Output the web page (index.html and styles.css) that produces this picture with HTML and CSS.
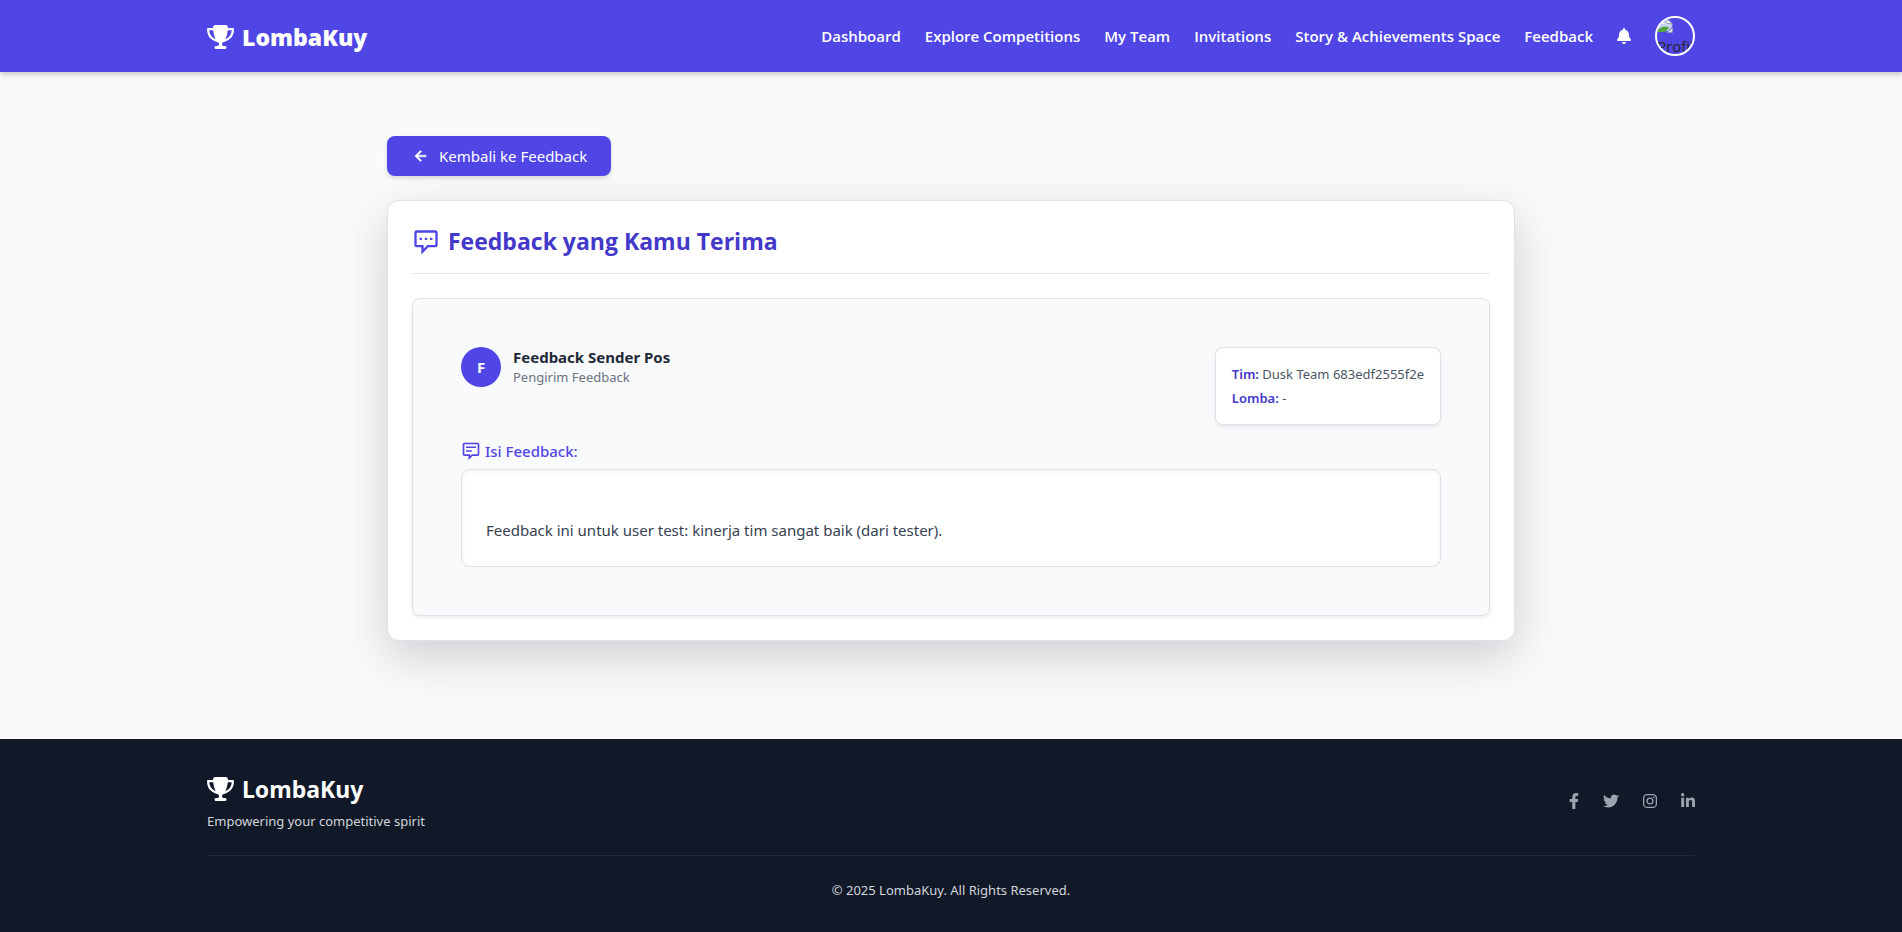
FILE: index.html
```html
<!DOCTYPE html>
<html lang="id">
<head>
<meta charset="utf-8">
<meta name="viewport" content="width=device-width, initial-scale=1">
<title>Feedback - LombaKuy</title>
<link rel="stylesheet" href="styles.css">
</head>
<body>
<svg class="sprite" aria-hidden="true">
  <symbol id="trophy" viewBox="0 0 576 512"><path d="M400 0H176c-26.500 0-48.100 21.800-47.100 48.200.2 5.300.4 10.600.7 15.800H24C10.700 64 0 74.700 0 88c0 92.600 33.500 157 78.500 200.700 44.300 43.100 98.300 64.800 138.100 75.800 23.400 6.500 39.400 26 39.400 45.600 0 20.900-17 37.900-37.900 37.900H192c-17.700 0-32 14.300-32 32s14.300 32 32 32h192c17.700 0 32-14.300 32-32s-14.300-32-32-32h-26.100c-20.900 0-37.900-17-37.900-37.900 0-19.600 15.900-39.200 39.400-45.600 39.900-11 93.900-32.700 138.200-75.800C542.500 245 576 180.600 576 88c0-13.300-10.700-24-24-24H446.400c.3-5.200.5-10.400.7-15.800C448.100 21.800 426.500 0 400 0zM48.900 112h84.400c9.100 90.100 29.200 150.300 51.900 190.600-24.900-11-50.800-26.500-73.200-48.300-32-31.100-58-76-63.100-142.300zm415.200 142.300c-22.400 21.800-48.300 37.300-73.200 48.300 22.700-40.300 42.800-100.500 51.900-190.600h84.400c-5.100 66.300-31.100 111.200-63.100 142.300z"/></symbol>
</svg>

<header class="topbar">
  <div class="container topbar-row">
    <a class="brand brand-heavy" href="#"><svg class="brand-icon" aria-hidden="true"><use href="#trophy"/></svg>LombaKuy</a>
    <nav class="nav" aria-label="Main">
      <a href="#">Dashboard</a>
      <a href="#">Explore Competitions</a>
      <a href="#">My Team</a>
      <a href="#">Invitations</a>
      <a href="#">Story &amp; Achievements Space</a>
      <a href="#">Feedback</a>
      <button class="bell" type="button" aria-label="Notifications">
        <svg viewBox="0 0 448 512" aria-hidden="true"><path d="M224 512c35.300 0 64-28.700 64-64H160c0 35.300 28.700 64 64 64zm215.400-149.700C420 341.500 383.900 310.200 383.900 208c0-77.700-54.500-139.900-127.900-155.200V32c0-17.700-14.300-32-32-32s-32 14.300-32 32v20.800C118.600 68.100 64.100 130.300 64.100 208c0 102.300-36.200 133.500-55.500 154.300-6 6.400-8.700 14.100-8.600 21.700.1 16.400 13 32 32.100 32h383.800c19.100 0 32-15.600 32.100-32 0-7.600-2.700-15.300-8.600-21.700z"/></svg>
      </button>
      <button class="profile" type="button">
        <svg viewBox="0 0 16 16" aria-hidden="true">
          <path d="M1 1h9l5 5v3l-4 4H1z" fill="#c6d6f4"/>
          <path d="M10 1v5h5z" fill="#fff"/>
          <path d="M3 5.500a1.500 1.500 0 0 1 2.500-1 1.500 1.500 0 0 1 2 1.500H3z" fill="#fff"/>
          <path d="M1 14v-2c3-3 6-4.500 10-3l1 1-4 4z" fill="#55a63a"/>
          <path d="M.5 14.500V.5H10l5 5V8M10 .5V5.500h5" fill="none" stroke="#a3a9b3"/>
          <path d="M15.500 9.500v5H10z" fill="#d5dbe5" stroke="#8d939c" stroke-width=".6"/>
        </svg>
        <span>Profile</span>
      </button>
    </nav>
  </div>
</header>

<main class="page">
  <a class="back" href="#">
    <svg viewBox="0 0 24 24" aria-hidden="true"><path d="M12.707 17.293 8.414 13H18v-2H8.414l4.293-4.293-1.414-1.414L4.586 12l6.707 6.707z" stroke="currentColor" stroke-width=".6"/></svg>
    Kembali ke Feedback
  </a>

  <section class="card">
    <h1 class="card-title">
      <svg viewBox="0 0 24 24" aria-hidden="true"><path d="M4 3h16a1 1 0 0 1 1 1v10.600a1 1 0 0 1-1 1h-6.400L9 20.200v-4.600H4a1 1 0 0 1-1-1V4a1 1 0 0 1 1-1z" fill="none" stroke="currentColor" stroke-width="2"/><path d="M6.500 8.300h2v2h-2zm4.500 0h2v2h-2zm4.500 0h2v2h-2z"/></svg>
      Feedback yang Kamu Terima
    </h1>

    <article class="feedback">
      <div class="feedback-head">
        <div class="sender">
          <span class="avatar" aria-hidden="true">F</span>
          <div>
            <h2 class="sender-name">Feedback Sender Pos</h2>
            <p class="sender-role">Pengirim Feedback</p>
          </div>
        </div>
        <div class="team">
          <p><strong>Tim:</strong> Dusk Team 683edf2555f2e</p>
          <p><strong>Lomba:</strong> -</p>
        </div>
      </div>
      <h3 class="label">
        <svg viewBox="0 0 24 24" aria-hidden="true"><path d="M4 3h16a1 1 0 0 1 1 1v12a1 1 0 0 1-1 1h-6.500L10 20.500V17H4a1 1 0 0 1-1-1V4a1 1 0 0 1 1-1z" fill="none" stroke="currentColor" stroke-width="2"/><path d="M6 6.500h12v2H6zm0 4.500h7v2H6z"/></svg>
        Isi Feedback:
      </h3>
      <p class="message">Feedback ini untuk user test: kinerja tim sangat baik (dari tester).</p>
    </article>
  </section>
</main>

<footer class="footer">
  <div class="container">
    <div class="footer-top">
      <div>
        <a class="brand" href="#"><svg class="brand-icon" aria-hidden="true"><use href="#trophy"/></svg>LombaKuy</a>
        <p class="tagline">Empowering your competitive spirit</p>
      </div>
      <div class="social">
        <a href="#" aria-label="Facebook"><svg class="fb" viewBox="0 0 320 512" aria-hidden="true"><path d="M279.140 288l14.220-92.660h-88.910v-60.130c0-25.350 12.420-50.060 52.240-50.060h40.420V6.260S260.430 0 225.360 0c-73.220 0-121.080 44.380-121.080 124.720v70.620H22.890V288h81.390v224h100.170V288z"/></svg></a>
        <a href="#" aria-label="Twitter"><svg class="tw" viewBox="0 0 512 512" aria-hidden="true"><path d="M459.370 151.716c.325 4.548.325 9.097.325 13.645 0 138.720-105.583 298.558-298.558 298.558-59.452 0-114.680-17.219-161.137-47.106 8.447.974 16.568 1.299 25.340 1.299 49.055 0 94.213-16.568 130.274-44.832-46.132-.975-84.792-31.188-98.112-72.772 6.498.974 12.995 1.624 19.818 1.624 9.421 0 18.843-1.300 27.614-3.573-48.081-9.747-84.143-51.980-84.143-102.985v-1.299c13.969 7.797 30.214 12.670 47.431 13.319-28.264-18.843-46.781-51.005-46.781-87.391 0-19.492 5.197-37.360 14.294-52.954 51.655 63.675 129.300 105.258 216.365 109.807-1.624-7.797-2.599-15.918-2.599-24.040 0-57.828 46.782-104.934 104.934-104.934 30.213 0 57.502 12.670 76.670 33.137 23.715-4.548 46.456-13.320 66.599-25.340-7.798 24.366-24.366 44.833-46.132 57.827 21.117-2.273 41.584-8.122 60.426-16.243-14.292 20.791-32.161 39.308-52.628 54.253z"/></svg></a>
        <a href="#" aria-label="Instagram"><svg class="ig" viewBox="0 0 448 512" aria-hidden="true"><rect x="20" y="52" width="408" height="408" rx="112" fill="none" stroke="currentColor" stroke-width="42"/><circle cx="224" cy="256" r="94" fill="none" stroke="currentColor" stroke-width="42"/><circle cx="344" cy="136" r="27"/></svg></a>
        <a href="#" aria-label="LinkedIn"><svg class="in" viewBox="0 0 448 512" aria-hidden="true"><path d="M100.280 448H7.400V148.900h92.880zM53.790 108.100C24.090 108.100 0 83.500 0 53.800a53.790 53.790 0 0 1 107.580 0c0 29.700-24.100 54.300-53.790 54.300zM447.900 448h-92.680V302.400c0-34.700-.7-79.200-48.290-79.200-48.290 0-55.690 37.700-55.690 76.700V448h-92.780V148.900h89.080v40.800h1.300c12.400-23.500 42.690-48.300 87.880-48.300 94 0 111.280 61.900 111.280 142.300V448z"/></svg></a>
      </div>
    </div>
    <p class="copyright">© 2025 LombaKuy. All Rights Reserved.</p>
  </div>
</footer>
</body>
</html>
```

FILE: styles.css
```css
* { box-sizing: border-box; }

body {
  margin: 0;
  min-height: 100vh;
  display: flex;
  flex-direction: column;
  background: #f9fafc;
  color: #212529;
  font: 15px/24px "Segoe UI", "Noto Sans", "Open Sans", sans-serif;
}

h1, h2, h3, p { margin: 0; }
a { color: inherit; text-decoration: none; }
button { padding: 0; border: 0; background: none; color: inherit; font: inherit; cursor: pointer; }
svg { display: block; flex: none; fill: currentColor; }
.sprite { position: absolute; width: 0; height: 0; }

.container {
  width: 100%;
  max-width: 1536px;
  margin: 0 auto;
  padding: 0 24px;
}

/* Top bar */
.topbar {
  position: relative;
  background: #4f46e5;
  color: #fff;
  box-shadow: 0 4px 6px rgba(0, 0, 0, .1), 0 2px 4px rgba(0, 0, 0, .1);
}
.topbar-row {
  display: flex;
  align-items: center;
  justify-content: space-between;
  height: 72px;
}
.brand {
  display: flex;
  align-items: center;
  gap: 8px;
  padding-top: 2px;
  font-size: 23px;
  font-weight: 700;
  line-height: 32px;
}
.brand-heavy { font-weight: 900; }
.brand-icon { width: 27px; height: 24px; }
.nav {
  display: flex;
  align-items: center;
  gap: 24px;
  font-family: "Segoe UI", "Open Sans", sans-serif;
  font-weight: 600;
}
.bell svg { width: 14px; height: 16px; }
.profile {
  width: 40px;
  height: 40px;
  overflow: hidden;
  border: 2px solid #fff;
  border-radius: 50%;
  color: #212529;
  font-weight: 400;
  text-align: left;
}
.profile svg { width: 16px; height: 16px; }
.profile span { display: block; line-height: 24px; }

/* Page */
.page {
  flex: 1;
  width: 100%;
  max-width: 1176px;
  margin: 0 auto;
  padding: 64px 24px 98px;
}
.back {
  display: inline-flex;
  align-items: center;
  gap: 8px;
  height: 40px;
  padding: 0 24px;
  border-radius: 8px;
  background: #4f46e5;
  color: #fff;
  box-shadow: 0 2px 4px rgba(0, 0, 0, .15);
}
.back svg { width: 20px; height: 20px; }

.card {
  margin-top: 24px;
  padding: 24px;
  border: 1px solid #dee2e6;
  border-radius: 12px;
  background: #fff;
  box-shadow: 0 16px 48px rgba(0, 0, 0, .175);
}
.card-title {
  display: flex;
  align-items: center;
  gap: 8px;
  margin-bottom: 24px;
  padding-bottom: 15px;
  border-bottom: 1px solid #e5e7eb;
  color: #4338ca;
  font-family: "Segoe UI", "Open Sans", sans-serif;
  font-size: 23px;
  font-weight: 700;
  line-height: 33px;
}
.card-title svg { width: 28px; height: 28px; color: #4f46e5; }

.feedback {
  padding: 48px;
  border: 1px solid #dee2e6;
  border-radius: 8px;
  background: #f9fafc;
  box-shadow: 0 2px 4px rgba(0, 0, 0, .075);
}
.feedback-head {
  display: flex;
  align-items: flex-start;
  justify-content: space-between;
  margin-bottom: 14px;
}
.sender { display: flex; align-items: center; gap: 12px; }
.avatar {
  display: grid;
  place-items: center;
  width: 40px;
  height: 40px;
  border-radius: 50%;
  background: #4f46e5;
  color: #fff;
  font-weight: 700;
}
.sender-name { color: #1f2937; font-size: 15px; font-weight: 700; line-height: 20px; }
.sender-role { color: #6b7280; font-size: 13px; line-height: 20px; }
.team {
  display: grid;
  gap: 4px;
  padding: 16px;
  border: 1px solid #dee2e6;
  border-radius: 8px;
  background: #fff;
  color: #4b5563;
  font-size: 13px;
  line-height: 20px;
  box-shadow: 0 2px 4px rgba(0, 0, 0, .075);
}
.team strong { color: #4338ca; font-weight: 600; }
.label {
  display: flex;
  align-items: center;
  gap: 4px;
  margin-bottom: 6px;
  color: #4f46e5;
  font-size: 15px;
  font-weight: 500;
}
.label svg { width: 20px; height: 20px; }
.message {
  padding: 48px 24px 24px;
  border: 1px solid #dee2e6;
  border-radius: 8px;
  background: #fff;
  color: #374151;
  box-shadow: inset 0 1px 4px rgba(0, 0, 0, .075);
}

/* Footer */
.footer {
  padding: 32px 0;
  background: #111827;
  color: #d1d5db;
  font-size: 13px;
  line-height: 20px;
}
.footer .brand { color: #fff; }
.footer-top {
  display: flex;
  align-items: center;
  justify-content: space-between;
  margin-bottom: 24px;
  padding-bottom: 24px;
  border-bottom: 1px solid #1f2937;
}
.tagline { margin-top: 6px; }
.social { display: flex; align-items: center; gap: 24px; color: #9ca3af; }
.social svg { height: 16px; }
.fb { width: 10px; }
.tw { width: 16px; }
.ig, .in { width: 14px; }
.copyright { text-align: center; }
```
